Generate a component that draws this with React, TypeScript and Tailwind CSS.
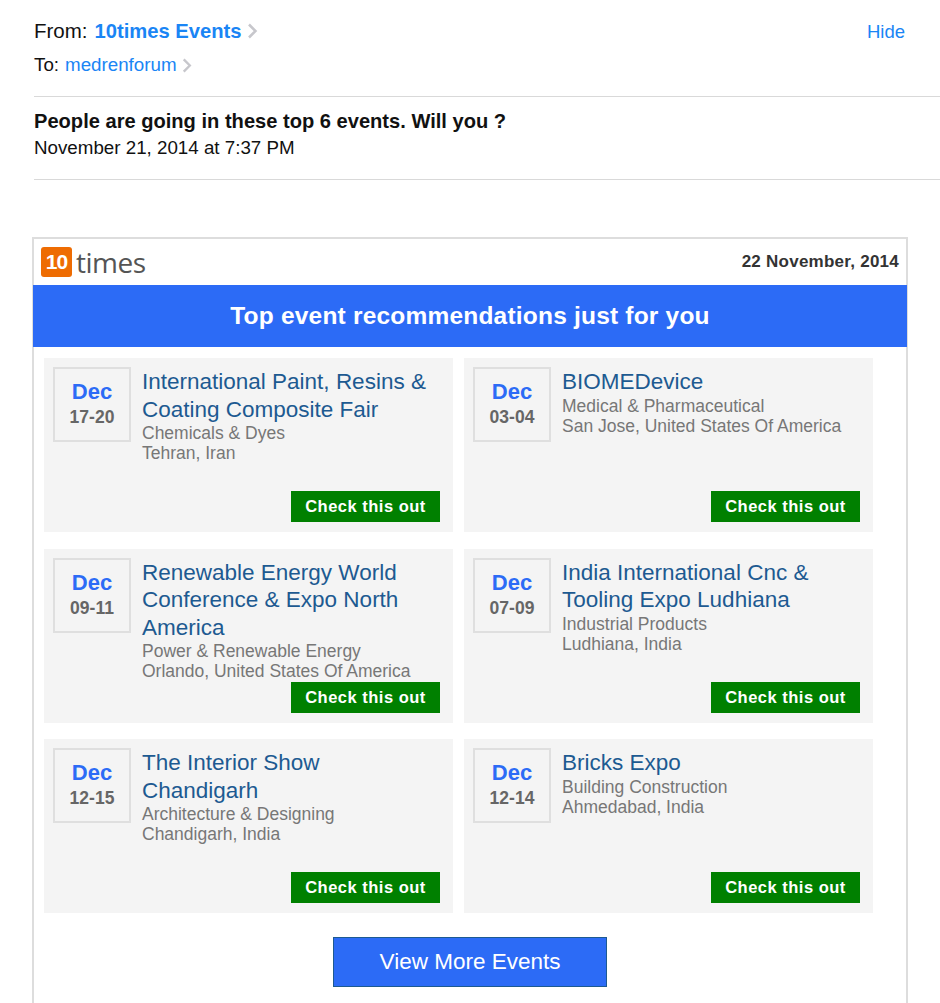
const events = [
  { month: 'Dec', days: '17-20', title: 'International Paint, Resins & Coating Composite Fair', category: 'Chemicals & Dyes', place: 'Tehran, Iran' },
  { month: 'Dec', days: '03-04', title: 'BIOMEDevice', category: 'Medical & Pharmaceutical', place: 'San Jose, United States Of America' },
  { month: 'Dec', days: '09-11', title: 'Renewable Energy World Conference & Expo North America', category: 'Power & Renewable Energy', place: 'Orlando, United States Of America' },
  { month: 'Dec', days: '07-09', title: 'India International Cnc & Tooling Expo Ludhiana', category: 'Industrial Products', place: 'Ludhiana, India' },
  { month: 'Dec', days: '12-15', title: 'The Interior Show Chandigarh', category: 'Architecture & Designing', place: 'Chandigarh, India' },
  { month: 'Dec', days: '12-14', title: 'Bricks Expo', category: 'Building Construction', place: 'Ahmedabad, India' },
];

const Chevron = ({ className }: { className: string }) => (
  <svg viewBox="0 0 10 16" className={className} fill="none" stroke="#c7c7cc" strokeWidth="2.500">
    <path d="M1.500 1.500 8 8l-6.500 6.500" />
  </svg>
);

const EventCard = ({ event }: { event: (typeof events)[number] }) => (
  <div className="flex h-[174px] w-[409px] flex-col bg-[#f4f4f4] pl-[9px] pr-[13px] pb-[10px] pt-[9px]">
    <div className="flex">
      <div className="flex h-[75px] w-[78px] shrink-0 flex-col items-center border-2 border-[#dfdfdf] pt-[10px]">
        <span className="text-[22px] leading-[25px] font-bold text-[#2c6bf6]">{event.month}</span>
        <span className="mt-[2px] text-[17.500px] leading-[22px] font-bold text-[#666666]">{event.days}</span>
      </div>
      <div className="ml-[11px] mt-px w-[288px]">
        <div className="text-[22.500px] leading-[27.500px] text-[#1d5a91]">{event.title}</div>
        <div className="text-[17.500px] leading-[20px] text-[#777777]">{event.category}</div>
        <div className="text-[17.500px] leading-[20px] text-[#777777]">{event.place}</div>
      </div>
    </div>
    <div className="mt-auto flex h-[31px] w-[149px] shrink-0 items-center justify-center self-end bg-[#008000] text-[16.500px] font-bold tracking-[0.5px] text-white">
      Check this out
    </div>
  </div>
);

export default function App() {
  return (
    <div className="h-[1003px] overflow-hidden bg-white font-['Liberation_Sans',sans-serif]">
      <div className="pl-[34px]">
        <div className="flex items-center pt-[18px] pr-[35px] text-[20.500px] leading-[26px] text-[#111111]">
          <span>From:</span>
          <span className="ml-[7px] text-[20.200px] font-bold text-[#1a85f5]">10times Events</span>
          <Chevron className="ml-[5px] h-[16px] w-[11px]" />
          <span className="ml-auto pt-[2px] text-[18.500px] leading-[24px] text-[#1a85f5]">Hide</span>
        </div>
        <div className="mt-[9px] flex items-center text-[18.750px] leading-[24px] text-[#111111]">
          <span>To:</span>
          <span className="ml-[6px] text-[#1a85f5]">medrenforum</span>
          <Chevron className="ml-[5px] h-[15px] w-[10px]" />
        </div>
        <div className="mt-[19px] border-t border-[#d9d9d9] pt-[11px]">
          <div className="text-[20.100px] leading-[26px] font-bold text-[#111111]">People are going in these top 6 events. Will you ?</div>
          <div className="mt-[1px] text-[18.750px] leading-[26px] text-[#111111]">November 21, 2014 at 7:37 PM</div>
        </div>
        <div className="mt-[18px] border-t border-[#d9d9d9]" />
      </div>

      <div className="mt-[57px] ml-[32px] w-[876px] border-2 border-b-0 border-[#dddddd] pb-[17px]">
        <div className="flex h-[46px] items-center justify-between pl-[7px] pr-[7px]">
          <div className="flex items-center">
            <div className="flex h-[30px] w-[31px] items-center justify-center rounded-[3px] bg-[#ee6c02] text-[21px] font-bold tracking-[-1px] text-white">10</div>
            <span className="ml-[4px] font-['Open_Sans',sans-serif] text-[28px] leading-[30px] tracking-[-0.5px] text-[#555555]">times</span>
          </div>
          <span className="text-[17px] font-bold tracking-[0.25px] text-[#333333]">22 November, 2014</span>
        </div>
        <div className="-mx-px flex h-[62px] items-center justify-center bg-[#2c6bf6] text-[24.500px] font-bold tracking-[0.2px] text-white">
          Top event recommendations just for you
        </div>
        <div className="grid grid-cols-[409px_409px] gap-x-[11px] gap-y-[16.500px] pl-[10px] pt-[11px]">
          {events.map((event) => (
            <EventCard key={event.days} event={event} />
          ))}
        </div>
        <div className="mt-[24px] flex justify-center">
          <div className="flex h-[50px] w-[274px] items-center justify-center border border-[#1d5a91] bg-[#2c6bf6] text-[22.500px] text-white">
            View More Events
          </div>
        </div>
      </div>
    </div>
  );
}
